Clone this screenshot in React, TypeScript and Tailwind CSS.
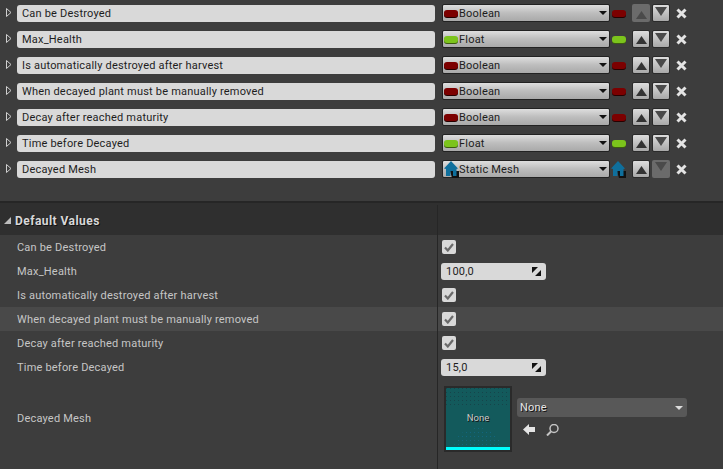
import type { ReactNode } from "react";

type Kind = "boolean" | "float" | "mesh";

const variables: { name: string; kind: Kind; label: string; upOff?: boolean; downOff?: boolean }[] = [
  { name: "Can be Destroyed", kind: "boolean", label: "Boolean", upOff: true },
  { name: "Max_Health", kind: "float", label: "Float" },
  { name: "Is automatically destroyed after harvest", kind: "boolean", label: "Boolean" },
  { name: "When decayed plant must be manually removed", kind: "boolean", label: "Boolean" },
  { name: "Decay after reached maturity", kind: "boolean", label: "Boolean" },
  { name: "Time before Decayed", kind: "float", label: "Float" },
  { name: "Decayed Mesh", kind: "mesh", label: "Static Mesh", downOff: true },
];

function Pin({ kind }: { kind: Kind }) {
  if (kind === "mesh") {
    return (
      <svg width="16" height="17" viewBox="0 0 16 17" className="-my-px shrink-0">
        <path d="M6 10h9v7H8z" fill="#111" />
        <path d="M7 0 14 7.500 12.500 8 12.500 15 9 15 9 10 6.500 10 6.500 15 2 15 2 8 0 7.500z" fill="#0f6f9c" />
      </svg>
    );
  }
  const main =
    kind === "boolean"
      ? "bg-[#7c0000] shadow-[0_1px_0_#260000]"
      : "bg-[#7cc41c] shadow-[0_1px_0_#3c5c10]";
  return <span className={`h-[7px] w-[14px] shrink-0 rounded-[3px] ${main}`} />;
}

function MoveButton({ dir, off }: { dir: "up" | "down"; off?: boolean }) {
  return (
    <button
      className={`flex h-[18px] w-[18px] justify-center rounded-[2px] ${
        dir === "up" ? "items-end pb-[3px]" : "items-start pt-[2px]"
      } ${off ? "bg-[#6b6b6b]" : "border border-[#2a2a2a] bg-gradient-to-b from-[#dcdcdc] to-[#a8a8a8]"}`}
    >
      {dir === "up" ? (
        <svg width="11" height="8" viewBox="0 0 11 8">
          <path d="M5.500 0 11 8H0z" fill={off ? "#4a4a4a" : "#333"} />
        </svg>
      ) : (
        <svg width="12" height="9" viewBox="0 0 12 9">
          <path d="M0 0H12L6 9z" fill="#4a4a4a" />
        </svg>
      )}
    </button>
  );
}

function VariableRow({ v }: { v: (typeof variables)[number] }) {
  return (
    <div className="flex h-[26px] items-center">
      <svg width="6" height="9" viewBox="0 0 6 9" className="ml-[6px] mr-[5px] shrink-0 -translate-y-px">
        <path d="M.5.5 5 4.500.5 8.500z" fill="none" stroke="#cfcfcf" />
      </svg>
      <div className="flex h-[17px] w-[418px] items-center rounded-[3px] bg-[#d9d9d9] pl-[5px] pt-[2px] text-[11px] tracking-[0.2px] text-[#1d1d1d]">
        {v.name}
      </div>
      <div className="ml-[7px] flex h-[18px] w-[168px] items-center rounded-[2px] border border-[#222] bg-gradient-to-b from-[#dedede] via-[#bdbdbd] to-[#a9a9a9] pl-px text-[11px] tracking-[0.2px] text-[#1d1d1d]">
        <span className="flex w-[15px] justify-start">
          <Pin kind={v.kind} />
        </span>
        <span className="flex-1 pt-[2px]">{v.label}</span>
        <svg width="8" height="4" viewBox="0 0 8 4" className="mr-[2px]">
          <path d="M0 0H8L4 4z" fill="#111" />
        </svg>
      </div>
      <span className="ml-[2px] flex w-[14px] justify-center">
        <Pin kind={v.kind} />
      </span>
      <span className="ml-[6px] flex gap-[2px]">
        <MoveButton dir="up" off={v.upOff} />
        <MoveButton dir="down" off={v.downOff} />
      </span>
      <svg width="11" height="11" viewBox="0 0 11 11" className="ml-[6px]">
        <path d="M1.500 1.500 9.500 9.500M9.500 1.500 1.500 9.500" stroke="#e4e4e4" strokeWidth="3" />
      </svg>
    </div>
  );
}

function Check() {
  return (
    <span className="flex h-[14px] w-[14px] items-center justify-center rounded-[2px] bg-[#d9d9d9]">
      <svg width="10" height="9" viewBox="0 0 10 9">
        <path d="M1 4.500 3.800 7.500 9 1" fill="none" stroke="#6a6a6a" strokeWidth="2.200" />
      </svg>
    </span>
  );
}

function NumberBox({ value }: { value: string }) {
  return (
    <div className="-ml-px flex h-[17px] w-[105px] items-center justify-between rounded-[3px] bg-[#d9d9d9] pl-[5px] pr-[5px] text-[11px] tracking-[0.2px] text-[#1d1d1d]">
      <span className="pt-[2px]">{value}</span>
      <svg width="9" height="9" viewBox="0 0 9 9">
        <path d="M0 0H6L0 6zM9 9H3L9 3z" fill="#111" />
      </svg>
    </div>
  );
}

function ValueRow({ label, hi, children }: { label: string; hi?: boolean; children: ReactNode }) {
  return (
    <div className={`flex h-[24px] items-center ${hi ? "bg-[#494949]" : ""}`}>
      <div className="w-[437px] pl-[17px] pt-[2px] text-[11px] tracking-[0.2px] text-[#c6c6c6]">{label}</div>
      <div className="flex h-full items-center border-l border-[#262626] pl-[4px]">{children}</div>
    </div>
  );
}

export default function App() {
  return (
    <div
      className="flex h-[469px] w-[723px] flex-col overflow-hidden bg-[#3d3d3d]"
      style={{ fontFamily: "Roboto, sans-serif" }}
    >
      <div className="h-[201px] shrink-0">
        {variables.map((v) => (
          <VariableRow key={v.name} v={v} />
        ))}
      </div>
      <div className="h-[2px] shrink-0 bg-[#262626]" />
      <div className="flex h-[32px] shrink-0 items-center bg-[#2f2f2f] pt-[2px]">
        <svg width="7" height="7" viewBox="0 0 7 7" className="ml-[4px] mr-[4px] shrink-0">
          <path d="M7 0V7H0z" fill="#bdbdbd" />
        </svg>
        <span className="w-[422px] pt-px text-[12px] font-bold tracking-[0.45px] text-[#d8d8d8] [text-shadow:1px_1px_0_#111]">
          Default Values
        </span>
        <span className="h-full border-l border-[#262626]" />
      </div>
      <ValueRow label="Can be Destroyed"><Check /></ValueRow>
      <ValueRow label="Max_Health"><NumberBox value="100,0" /></ValueRow>
      <ValueRow label="Is automatically destroyed after harvest"><Check /></ValueRow>
      <ValueRow label="When decayed plant must be manually removed" hi><Check /></ValueRow>
      <ValueRow label="Decay after reached maturity"><Check /></ValueRow>
      <ValueRow label="Time before Decayed"><NumberBox value="15,0" /></ValueRow>
      <div className="flex flex-1 items-start">
        <div className="w-[437px] pl-[17px] pt-[32px] text-[11px] tracking-[0.2px] text-[#c6c6c6]">Decayed Mesh</div>
        <div className="flex h-full gap-[5px] border-l border-[#262626] pl-[6px] pt-[7px]">
          <div className="relative flex h-[66px] w-[68px] flex-col border-[2px] border-[#2a2a2a] bg-[#135a5c]">
            <svg width="64" height="59" className="absolute left-0 top-0">
              <defs>
                <pattern id="dots" width="4" height="4" patternUnits="userSpaceOnUse">
                  <rect width="1" height="1" fill="#16444a" />
                </pattern>
                <pattern id="dotsBlue" width="4" height="4" patternUnits="userSpaceOnUse">
                  <rect width="1" height="1" fill="#12667e" />
                </pattern>
              </defs>
              <rect width="64" height="18" fill="url(#dots)" />
              <ellipse cx="32" cy="59" rx="24" ry="19" fill="url(#dotsBlue)" />
            </svg>
            <span className="relative flex flex-1 items-center justify-center pt-[2px] text-[9.500px] text-[#c9c9c9] [text-shadow:1px_1px_0_#111]">
              None
            </span>
            <span className="relative h-[3px] bg-[#00ffff]" />
          </div>
          <div className="flex flex-col pt-[12px]">
            <div className="flex h-[19px] w-[170px] items-center justify-between rounded-[3px] bg-[#585858] pl-[3px] pr-[4px] text-[11px] tracking-[0.2px] text-[#e4e4e4] [text-shadow:1px_1px_0_#111]">
              <span className="pt-[2px]">None</span>
              <svg width="8" height="4" viewBox="0 0 8 4">
                <path d="M0 0H8L4 4z" fill="#dcdcdc" />
              </svg>
            </div>
            <div className="ml-[6px] mt-[7px] flex gap-[11px]">
              <svg width="12" height="11" viewBox="0 0 12 11">
                <path d="M0 5.500 6 0V3H12V8H6V11z" fill="#e4e4e4" />
              </svg>
              <svg width="13" height="12" viewBox="0 0 13 12">
                <circle cx="8" cy="4.500" r="4" fill="none" stroke="#c4c4c4" strokeWidth="1.500" />
                <path d="M5 7.500 1 11.500" stroke="#c4c4c4" strokeWidth="2" />
              </svg>
            </div>
          </div>
        </div>
      </div>
    </div>
  );
}
